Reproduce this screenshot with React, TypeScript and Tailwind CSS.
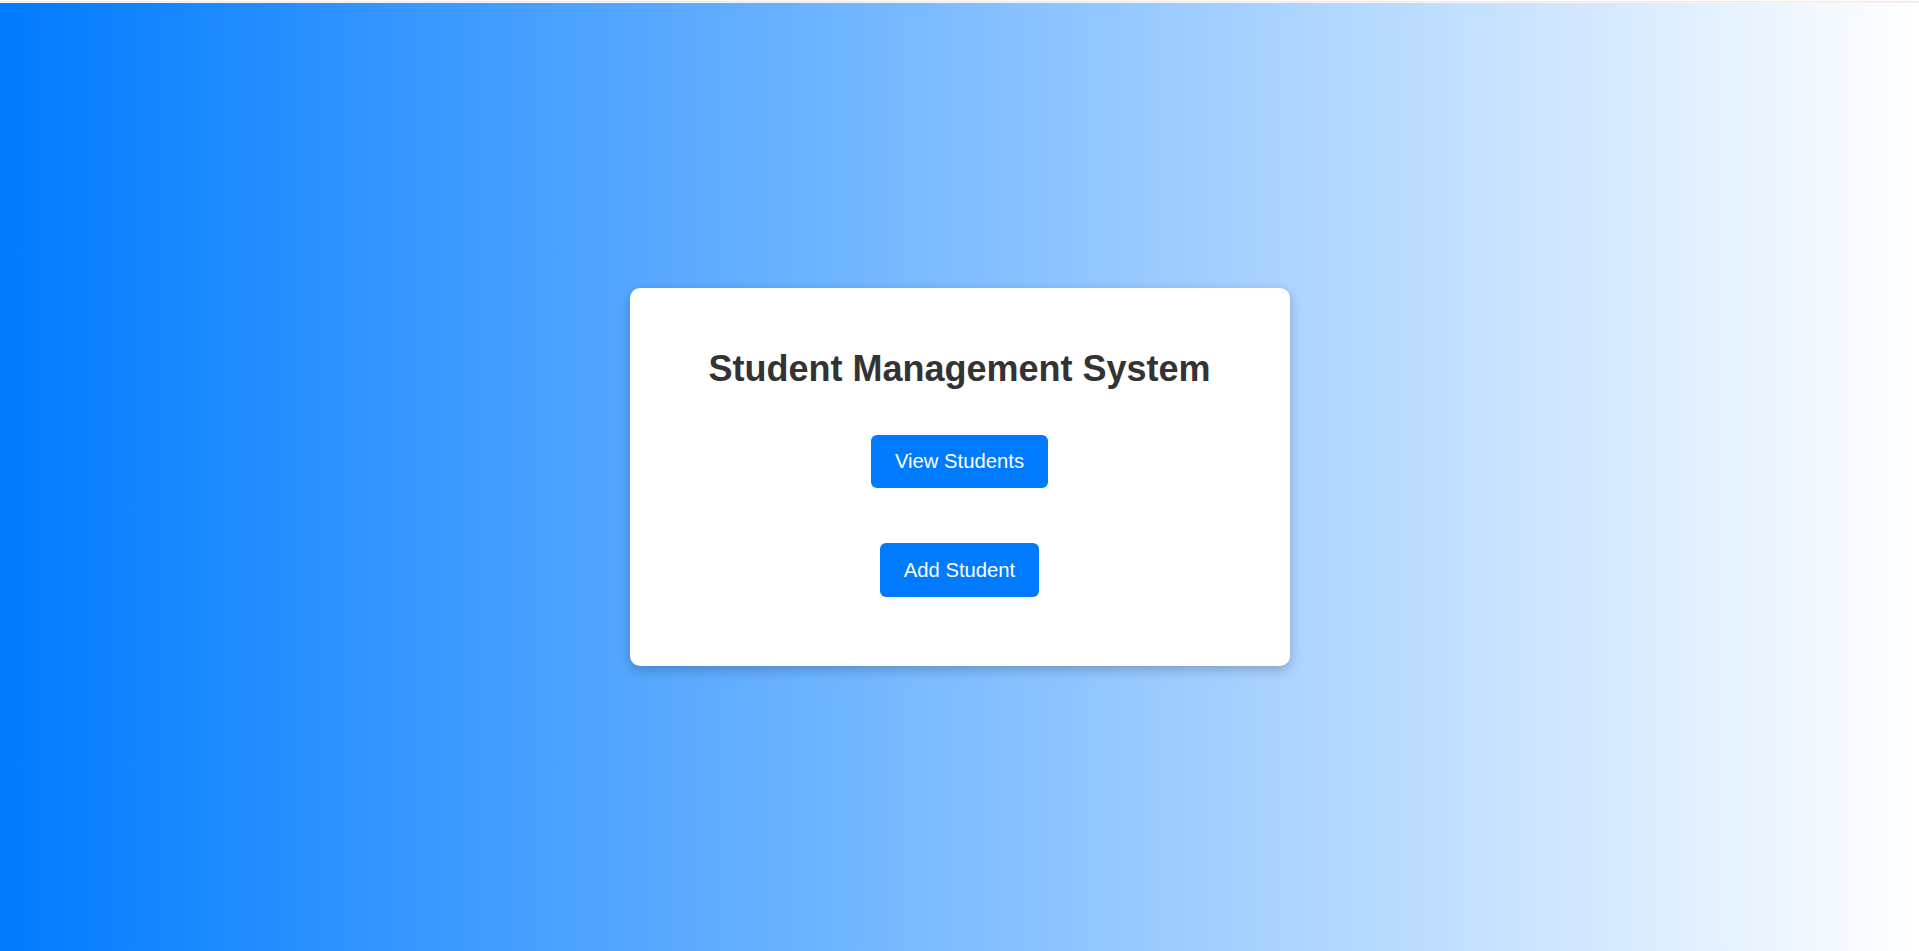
import React from "react";

export default function App() {
  return (
    <div
      className="w-full h-[951px] flex flex-col overflow-hidden"
      style={{ fontFamily: '"Liberation Sans", Arial, sans-serif' }}
    >
      <div className="h-[3px] flex flex-col shrink-0">
        <div className="h-[1px] bg-white" />
        <div className="h-[1px] bg-[#fbe3e3]" />
        <div className="h-[1px] bg-[#fdf3f3]" />
      </div>
      <div className="flex-1 flex items-center justify-center bg-[linear-gradient(to_right,#007bff,#ffffff)]">
        <div className="w-[660px] h-[378px] bg-white rounded-[10px] shadow-[0_4px_12px_rgba(0,0,0,0.22)] flex flex-col items-center pt-[60px]">
          <h1 className="text-[36px] leading-[41px] font-bold text-[#333333]">
            Student Management System
          </h1>
          <button className="mt-[46px] h-[53px] px-[24px] bg-[#007bff] text-white text-[20.25px] leading-[23px] rounded-[6px]">
            View Students
          </button>
          <button className="mt-[55px] h-[54px] px-[24px] bg-[#007bff] text-white text-[20.25px] leading-[23px] rounded-[6px]">
            Add Student
          </button>
        </div>
      </div>
    </div>
  );
}
